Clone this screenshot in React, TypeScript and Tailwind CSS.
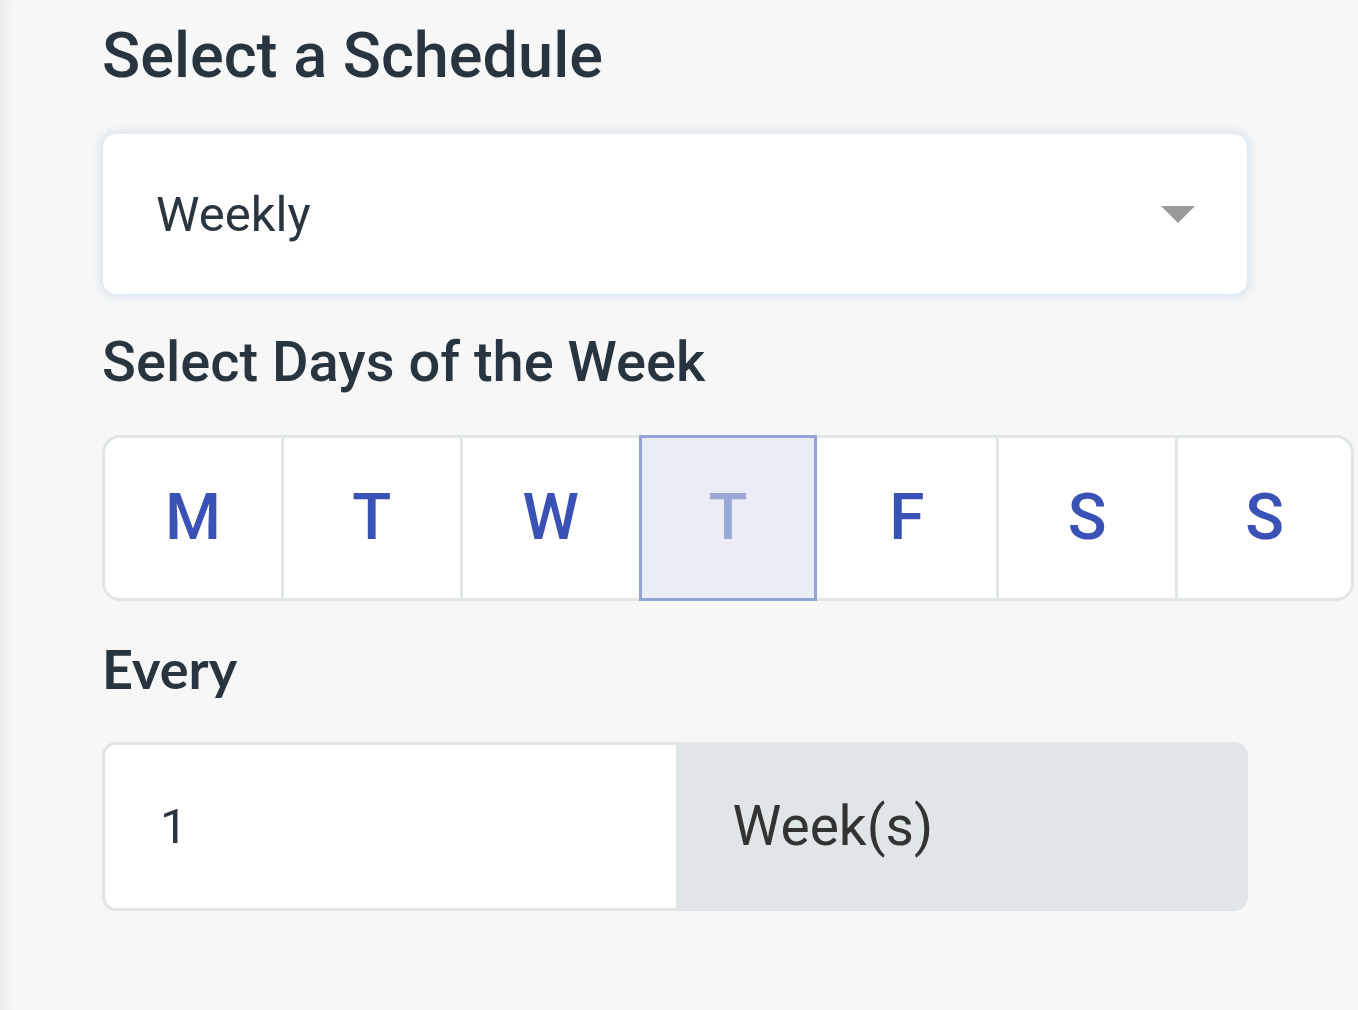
import { useState } from "react";

const days = ["M", "T", "W", "T", "F", "S", "S"];

function Caret() {
  return (
    <svg width="34" height="17" viewBox="0 0 34 17" className="shrink-0">
      <polygon points="0,0 34,0 17,17" fill="#999999" />
    </svg>
  );
}

export default function App() {
  const [selected, setSelected] = useState(3);

  return (
    <div className="min-h-screen bg-[#f7f7f7] shadow-[inset_14px_0_14px_-10px_rgba(0,0,0,0.06)] pt-[24px] pl-[102px] font-['Roboto',sans-serif] text-[#28343f]">
      <h1 className="text-[63px] leading-none font-medium">Select a Schedule</h1>

      <div className="mt-[46px] w-[1146px] h-[162px] flex items-center justify-between pl-[53px] pr-[52px] bg-white rounded-[14px] border border-[#dfeaf2] shadow-[0_0_8px_2px_rgba(150,195,225,0.35)]">
        <span className="text-[49px] leading-none text-[#2b3540]">Weekly</span>
        <Caret />
      </div>

      <h2 className="mt-[39px] text-[56px] leading-none font-medium">Select Days of the Week</h2>

      <div className="mt-[45px] w-[1252px] h-[166px] grid grid-cols-7">
        {days.map((d, i) => {
          const active = i === selected;
          const afterActive = i === selected + 1;
          const first = i === 0;
          const last = i === days.length - 1;
          return (
            <button
              key={i}
              onClick={() => setSelected(i)}
              className={[
                "flex items-center justify-center border-y-[3px] text-[64px] leading-none font-medium",
                active
                  ? "border-x-[3px] border-[#94a6d8] bg-[#eaedf6] text-[#9aa8d8]"
                  : "border-[#e1e6e9] bg-white text-[#3a52b5]",
                !active && !afterActive ? "border-l-[3px]" : "",
                !active && afterActive ? "border-l-0" : "",
                !active && last ? "border-r-[3px]" : "",
                first ? "rounded-l-[18px]" : "",
                last ? "rounded-r-[18px]" : "",
              ].join(" ")}
            >
              {d}
            </button>
          );
        })}
      </div>

      <h3 className="mt-[41px] text-[54px] leading-none font-bold font-['Lato',sans-serif] text-[#28343f]">Every</h3>

      <div className="mt-[46px] w-[1146px] h-[169px] flex">
        <div className="flex-1 flex items-center pl-[55px] bg-white border-y-[3px] border-l-[3px] border-[#e3e3e3] rounded-l-[14px]">
          <span className="text-[49px] leading-none text-[#2a3540]">1</span>
        </div>
        <div className="flex-1 flex items-center pl-[57px] bg-[#e0e5e8] rounded-r-[14px]">
          <span className="text-[55px] leading-none text-[#333333]">Week(s)</span>
        </div>
      </div>
    </div>
  );
}
